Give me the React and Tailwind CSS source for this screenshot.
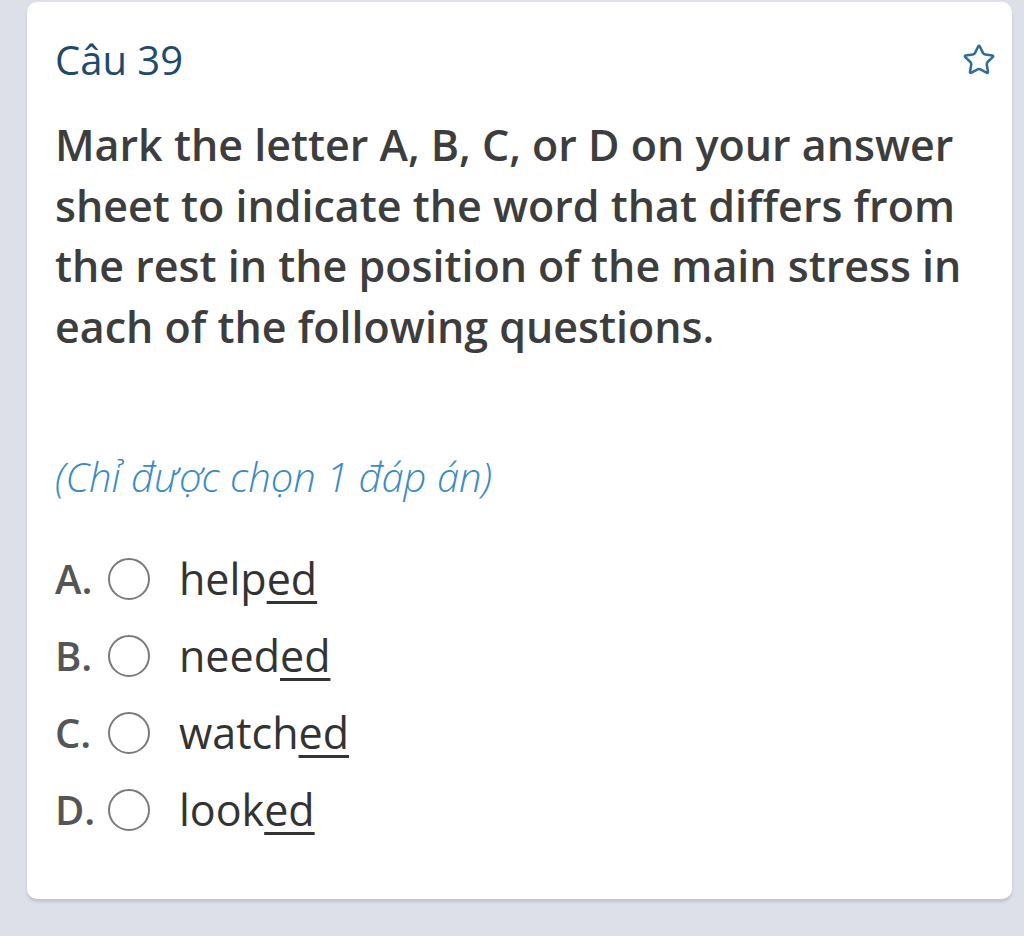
import { Star } from "lucide-react";

const options = [
  { letter: "A.", stem: "help", tail: "ed" },
  { letter: "B.", stem: "need", tail: "ed" },
  { letter: "C.", stem: "watch", tail: "ed" },
  { letter: "D.", stem: "look", tail: "ed" },
];

export default function App() {
  return (
    <div
      className="min-h-[936px] bg-[#dde0e8] pl-[27px] pr-[12px] pt-[2px]"
      style={{ fontFamily: '"Open Sans", "Noto Sans", sans-serif' }}
    >
      <div className="rounded-[10px] bg-white pl-[28px] pr-[16px] pt-[34px] pb-[62px] shadow-[0_3px_3px_rgba(0,0,0,0.12)]">
        <div className="flex items-start justify-between">
          <h2 className="text-[40px] leading-[48px] text-[#1e4a6b]">Câu 39</h2>
          <Star className="mt-[7px] h-[34px] w-[34px] text-[#2f6e9b]" strokeWidth={1.8} />
        </div>

        <p className="mt-[31px] pr-[6px] text-[43px] leading-[60.5px] font-semibold text-[#3d3d3d]">
          Mark the letter A, B, C, or D on your answer sheet to indicate the word
          that differs from the rest in the position of the main stress in each
          of the following questions.
        </p>

        <p className="mt-[96px] text-[40px] leading-[48px] italic font-light text-[#3a8bc4]">
          (Chỉ được chọn 1 đáp án)
        </p>

        <div className="mt-[51px] flex flex-col gap-[23px]">
          {options.map((o) => (
            <div key={o.letter} className="flex items-center h-[54px]">
              <span className="w-[53px] text-[40px] font-semibold text-[#555]">
                {o.letter}
              </span>
              <span className="h-[42px] w-[42px] rounded-full border-2 border-[#7a7a7a]" />
              <span className="ml-[29px] text-[43px] text-[#333]">
                {o.stem}
                <span className="underline decoration-[3px] underline-offset-[6px]">
                  {o.tail}
                </span>
              </span>
            </div>
          ))}
        </div>
      </div>
    </div>
  );
}
